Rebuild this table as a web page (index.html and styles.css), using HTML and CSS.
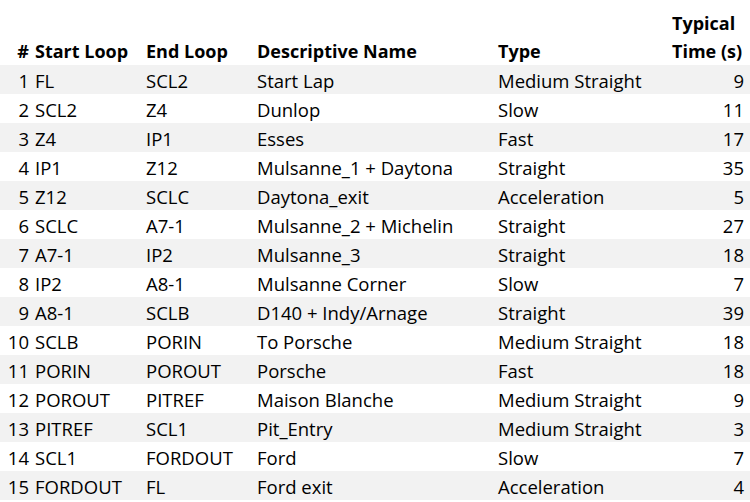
FILE: index.html
```html
<!DOCTYPE html>
<html lang="en">
<head>
<meta charset="utf-8">
<title>Le Mans Loops</title>
<link rel="stylesheet" href="styles.css">
</head>
<body>
<table class="loops">
  <colgroup>
    <col class="c-num"><col class="c-start"><col class="c-end"><col class="c-desc"><col class="c-type"><col class="c-time">
  </colgroup>
  <thead>
    <tr>
      <th class="num">#</th>
      <th>Start Loop</th>
      <th>End Loop</th>
      <th>Descriptive Name</th>
      <th>Type</th>
      <th>Typical<br>Time (s)</th>
    </tr>
  </thead>
  <tbody>
    <tr><td class="num">1</td><td>FL</td><td>SCL2</td><td>Start Lap</td><td>Medium Straight</td><td class="time">9</td></tr>
    <tr><td class="num">2</td><td>SCL2</td><td>Z4</td><td>Dunlop</td><td>Slow</td><td class="time">11</td></tr>
    <tr><td class="num">3</td><td>Z4</td><td>IP1</td><td>Esses</td><td>Fast</td><td class="time">17</td></tr>
    <tr><td class="num">4</td><td>IP1</td><td>Z12</td><td>Mulsanne_1 + Daytona</td><td>Straight</td><td class="time">35</td></tr>
    <tr><td class="num">5</td><td>Z12</td><td>SCLC</td><td>Daytona_exit</td><td>Acceleration</td><td class="time">5</td></tr>
    <tr><td class="num">6</td><td>SCLC</td><td>A7-1</td><td>Mulsanne_2 + Michelin</td><td>Straight</td><td class="time">27</td></tr>
    <tr><td class="num">7</td><td>A7-1</td><td>IP2</td><td>Mulsanne_3</td><td>Straight</td><td class="time">18</td></tr>
    <tr><td class="num">8</td><td>IP2</td><td>A8-1</td><td>Mulsanne Corner</td><td>Slow</td><td class="time">7</td></tr>
    <tr><td class="num">9</td><td>A8-1</td><td>SCLB</td><td>D140 + Indy/Arnage</td><td>Straight</td><td class="time">39</td></tr>
    <tr><td class="num">10</td><td>SCLB</td><td>PORIN</td><td>To Porsche</td><td>Medium Straight</td><td class="time">18</td></tr>
    <tr><td class="num">11</td><td>PORIN</td><td>POROUT</td><td>Porsche</td><td>Fast</td><td class="time">18</td></tr>
    <tr><td class="num">12</td><td>POROUT</td><td>PITREF</td><td>Maison Blanche</td><td>Medium Straight</td><td class="time">9</td></tr>
    <tr><td class="num">13</td><td>PITREF</td><td>SCL1</td><td>Pit_Entry</td><td>Medium Straight</td><td class="time">3</td></tr>
    <tr><td class="num">14</td><td>SCL1</td><td>FORDOUT</td><td>Ford</td><td>Slow</td><td class="time">7</td></tr>
    <tr><td class="num">15</td><td>FORDOUT</td><td>FL</td><td>Ford exit</td><td>Acceleration</td><td class="time">4</td></tr>
  </tbody>
</table>
</body>
</html>
```

FILE: styles.css
```css
html, body {
  margin: 0;
  padding: 0;
  background: #ffffff;
}

body {
  font-family: "Open Sans", "Noto Sans", sans-serif;
  font-size: 18px;
  color: #000000;
}

.loops {
  width: 750px;
  border-collapse: collapse;
  table-layout: fixed;
}

.c-num { width: 32px; }
.c-start { width: 111px; }
.c-end { width: 111px; }
.c-desc { width: 241px; }
.c-type { width: 174px; }
.c-time { width: 81px; }

.loops th,
.loops td {
  padding: 0 3px;
  text-align: left;
  white-space: nowrap;
  overflow: visible;
}

.loops th {
  height: 65px;
  font-weight: 700;
  line-height: 28px;
  vertical-align: bottom;
}

.loops td {
  height: 29px;
  box-sizing: border-box;
  padding-top: 3px;
  font-size: 18.5px;
  line-height: 26px;
  vertical-align: top;
}

.loops tbody tr:nth-child(odd) {
  background: #f2f2f2;
}

.loops .num {
  text-align: right;
}

.loops td.time {
  text-align: right;
  padding-right: 6px;
}
```
